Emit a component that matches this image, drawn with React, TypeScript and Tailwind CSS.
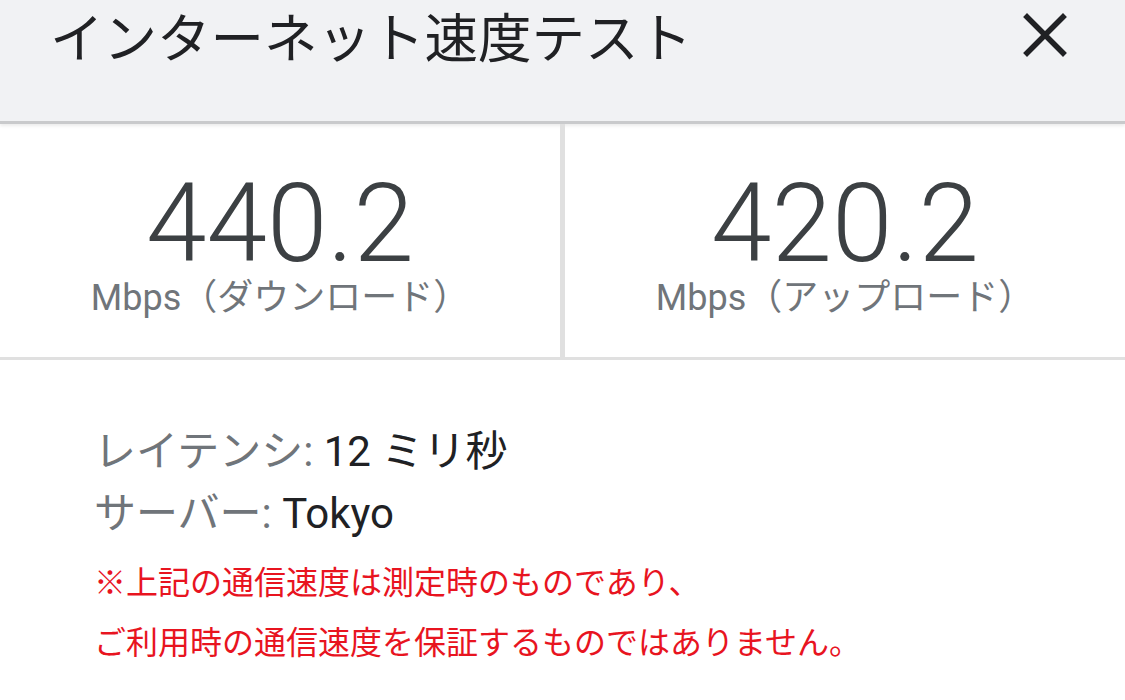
import React from "react";

const jp = { fontFamily: '"Helvetica Neue", Roboto, "Noto Sans CJK JP", sans-serif' };

const Stat = ({ value, label }: { value: string; label: string }) => (
  <div className="flex flex-1 flex-col items-center pt-[50px]">
    <div className="text-[109px] font-light leading-[100px] text-[#3c4043]">{value}</div>
    <div className="mt-[3px] text-[36px] leading-[42px] text-[#70757a]">{label}</div>
  </div>
);

const App: React.FC = () => {
  return (
    <div className="w-[1125px] h-[700px] overflow-hidden bg-white" style={jp}>
      <header className="h-[124px] bg-[#f1f2f4] border-b-[3px] border-[#c9cacc] shadow-[0_2px_3px_rgba(0,0,0,0.08)] flex items-start justify-between pl-[50px] pr-[58px]">
        <h1 className="text-[53.5px] leading-[80px] text-[#202124] font-normal">
          インターネット速度テスト
        </h1>
        <button className="mt-[13px]">
          <svg width="44" height="44" viewBox="0 0 44 44">
            <path d="M4 4 L40 40 M40 4 L4 40" stroke="#202124" strokeWidth="5.5" strokeLinecap="square" />
          </svg>
        </button>
      </header>
      <div className="flex h-[236px] border-b-[3px] border-[#e0e0e0]">
        <Stat value="440.2" label="Mbps（ダウンロード）" />
        <div className="w-[5px] bg-[#e0e0e0]" />
        <Stat value="420.2" label="Mbps（アップロード）" />
      </div>
      <div className="pl-[94px] pt-[61px]">
        <div className="text-[42px] leading-[62px]">
          <span className="text-[#70757a]">レイテンシ: </span>
          <span className="text-[#202124]">12 ミリ秒</span>
        </div>
        <div className="text-[42px] leading-[62px]">
          <span className="text-[#70757a]">サーバー: </span>
          <span className="text-[#202124]">Tokyo</span>
        </div>
        <div className="mt-[8px] text-[32px] leading-[60px] text-[#e8141f]">
          <div>※上記の通信速度は測定時のものであり、</div>
          <div>ご利用時の通信速度を保証するものではありません。</div>
        </div>
      </div>
    </div>
  );
};

export default App;
